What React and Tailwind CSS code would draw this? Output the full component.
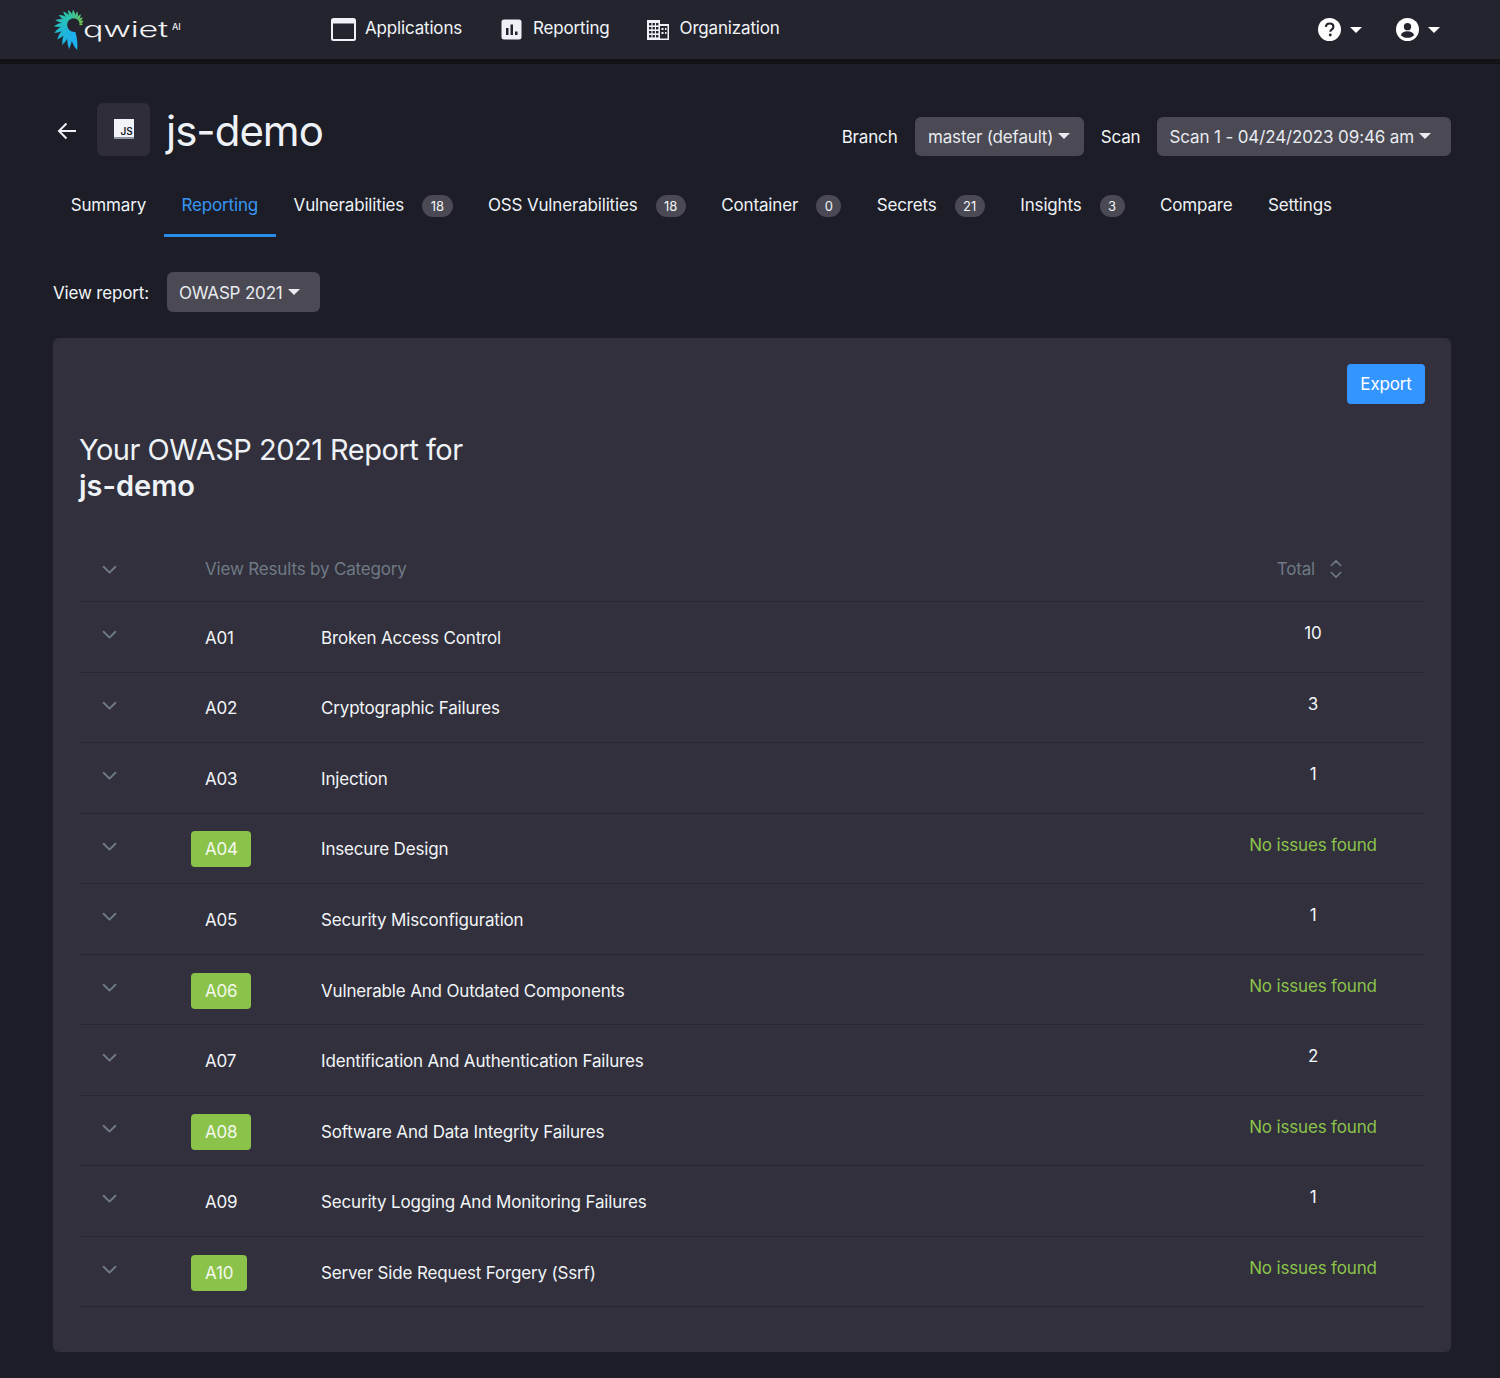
import React from "react";

const Caret = ({ className = "" }) => (
  <span className={"inline-block w-0 h-0 border-x-[6px] border-x-transparent border-t-[6px] border-t-current " + className} />
);

const Chevron = ({ up = false, className = "" }) => (
  <svg viewBox="0 0 14 9" className={className} fill="none" stroke="currentColor" strokeWidth="1.8" strokeLinecap="round" strokeLinejoin="round">
    <path d={up ? "M1.5 7.5 7 2l5.500 5.500" : "M1.500 1.500 7 7l5.500-5.500"} />
  </svg>
);

const mix = (a, b, t) => a.map((v, i) => Math.round(v + (b[i] - v) * t));
const bladeColor = (t) => {
  const g = [122, 199, 79], m = [44, 196, 170], b = [28, 176, 238];
  const c = t < 0.45 ? mix(g, m, t / 0.45) : mix(m, b, (t - 0.45) / 0.55);
  return `rgb(${c.join(",")})`;
};

const Logo = () => {
  const cx = 21, cy = 14.5, n = 16;
  const pt = (r, deg) => {
    const a = (deg * Math.PI) / 180;
    return [cx + r * Math.cos(a), cy - r * Math.sin(a)];
  };
  const f = (p) => p[0].toFixed(2) + " " + p[1].toFixed(2);
  const blades = [];
  for (let i = 0; i < n; i++) {
    const t = i / (n - 1);
    const th = -8 + t * 262;
    const ri = 5.5 + 2 * t;
    const ro = 9 + 17 * t;
    const w = 12 + 8 * t;
    const sweep = 9 + 14 * t;
    const a = pt(ri, th);
    const b = pt(ro, th + sweep);
    const c = pt(ri + 0.2, th + w + 6);
    const q1 = pt((ri + ro) / 2, th - 1);
    const q2 = pt((ri + ro) / 2 + 1, th + w + 10);
    blades.push(
      <path key={i} d={`M${f(a)} Q${f(q1)} ${f(b)} Q${f(q2)} ${f(c)} Z`} fill={bladeColor(t)} />
    );
  }
  return (
    <div className="flex items-center w-[278px] h-[40px] shrink-0">
      <svg viewBox="0 0 30 40" className="w-[30px] h-[40px] shrink-0 overflow-visible">{blades}</svg>
      <div className="w-[89px]">
        <span className="block w-[57px] text-[22px] leading-none font-light text-[#f0f2f4] scale-x-[1.55] origin-left mb-[2px]" style={{ fontFamily: "Inter, sans-serif" }}>qwiet</span>
      </div>
      <span className="text-[9px] leading-none text-[#e8eaec] font-medium mb-[7px]">AI</span>
    </div>
  );
};

const WindowIcon = () => (
  <svg viewBox="0 0 25 23" className="w-[25px] h-[23px]">
    <rect x="1" y="1" width="23" height="21" rx="1.500" fill="none" stroke="#eef2f6" strokeWidth="2" />
    <rect x="1" y="1" width="23" height="4.500" fill="#eef2f6" />
  </svg>
);
const ChartIcon = () => (
  <svg viewBox="0 0 21 21" className="w-[21px] h-[21px]">
    <rect x="0.500" y="0.500" width="20" height="20" rx="2.500" fill="#eef2f6" />
    <rect x="5" y="9" width="2.500" height="7" fill="#24242f" />
    <rect x="9.500" y="5.500" width="2.500" height="10.500" fill="#24242f" />
    <rect x="14" y="12.500" width="2.500" height="3.500" fill="#24242f" />
  </svg>
);
const BuildingIcon = () => (
  <svg viewBox="0 0 24 22" className="w-[24px] h-[22px]">
    <path d="M1 1h13v4h9v16H1z" fill="#eef2f6" />
    <g fill="#24242f">
      <rect x="3" y="4" width="2.400" height="2.400" /><rect x="6.500" y="4" width="2.400" height="2.400" /><rect x="10" y="4" width="2.400" height="2.400" />
      <rect x="3" y="8" width="2.400" height="2.400" /><rect x="6.500" y="8" width="2.400" height="2.400" /><rect x="10" y="8" width="2.400" height="2.400" />
      <rect x="3" y="12" width="2.400" height="2.400" /><rect x="6.500" y="12" width="2.400" height="2.400" /><rect x="10" y="12" width="2.400" height="2.400" />
      <rect x="3" y="16" width="2.400" height="2.400" /><rect x="6.500" y="16" width="2.400" height="2.400" /><rect x="10" y="16" width="2.400" height="2.400" />
      <rect x="14" y="7" width="7.500" height="12.500" />
    </g>
    <g fill="#eef2f6">
      <rect x="15.500" y="9" width="2" height="2" /><rect x="19" y="9" width="1.500" height="2" />
      <rect x="15.500" y="13" width="2" height="2" /><rect x="19" y="13" width="1.500" height="2" />
    </g>
  </svg>
);
const HelpIcon = () => (
  <svg viewBox="0 0 24 24" className="w-[23px] h-[23px]">
    <circle cx="12" cy="12" r="12" fill="#fff" />
    <path d="M8.200 9.300C8.400 7 10 5.800 12.200 5.800c2.300 0 3.900 1.400 3.900 3.300 0 1.500-.8 2.300-1.900 3-1 .7-1.300 1.100-1.300 2.200" fill="none" stroke="#24242f" strokeWidth="2.200" />
    <circle cx="12.800" cy="17.800" r="1.500" fill="#24242f" />
  </svg>
);
const UserIcon = () => (
  <svg viewBox="0 0 24 24" className="w-[23px] h-[23px]">
    <circle cx="12" cy="12" r="12" fill="#fff" />
    <circle cx="12" cy="9" r="3.800" fill="#24242f" />
    <path d="M5 18c.8-3 3.500-4.300 7-4.300s6.200 1.300 7 4.300c-1.800 1.700-4.200 2.700-7 2.700s-5.200-1-7-2.700z" fill="#24242f" />
  </svg>
);

const NavItem = ({ icon, label, gap, className = "" }) => (
  <div className={"flex items-center " + className}>
    {icon}
    <span className={"text-[#f2f5f8] mb-[4px] " + gap}>{label}</span>
  </div>
);

const Tab = ({ label, count, active }) => (
  <div className={"flex items-center h-[64px] px-[17.75px] pt-[2px] border-b-[3px] " + (active ? "border-[#2a8ae8] text-[#3797f5]" : "border-transparent text-[#eef2f6]")}>
    <span>{label}</span>
    {count !== undefined && (
      <span className="ml-[18px] h-[22px] px-[8.5px] rounded-full bg-[#4a4954] text-[#f2f5f8] text-[13px] tracking-normal flex items-center justify-center mt-[2px]">{count}</span>
    )}
  </div>
);

const DropBtn = ({ label, className = "", textClass = "" }) => (
  <div className={"flex items-center rounded-[6px] bg-[#4a4954] text-[#e9ebef] " + className}>
    <span className={"mt-[2px] " + textClass}>{label}</span>
    <Caret className="ml-[5px]" />
  </div>
);

const rows = [
  ["A01", "Broken Access Control", "10"],
  ["A02", "Cryptographic Failures", "3"],
  ["A03", "Injection", "1"],
  ["A04", "Insecure Design", null],
  ["A05", "Security Misconfiguration", "1"],
  ["A06", "Vulnerable And Outdated Components", null],
  ["A07", "Identification And Authentication Failures", "2"],
  ["A08", "Software And Data Integrity Failures", null],
  ["A09", "Security Logging And Monitoring Failures", "1"],
  ["A10", "Server Side Request Forgery (Ssrf)", null],
];

const Row = ({ code, name, total }) => (
  <div className="flex h-[70.56px] border-b border-[#272631]">
    <div className="w-[111px] pl-[22px] pt-[28px]">
      <Chevron className="w-[15px] h-[10px] text-[#6f7a85]" />
    </div>
    <div className="w-[130px] flex items-center pt-[2px]">
      {total === null ? (
        <span className="h-[36px] rounded-[4px] bg-[#8bc34a] text-[#f4f8ee] flex items-center pl-[14px] pr-[13.5px]">{code}</span>
      ) : (
        <span className="pl-[14px] text-[#f2f5f8]">{code}</span>
      )}
    </div>
    <div className="flex-1 flex items-center pt-[2px] text-[#f2f5f8]">{name}</div>
    <div className={"w-[128px] mr-[47px] text-center whitespace-nowrap pt-[18px] " + (total === null ? "text-[#8bc34a]" : "text-[#f2f5f8]")}>
      {total === null ? "No issues found" : total}
    </div>
  </div>
);

export default function App() {
  return (
    <div className="min-h-[1378px] bg-[#1c1d26] text-[17px] leading-[26px] tracking-[-0.17px] text-[#f2f5f8]" style={{ fontFamily: "Inter, 'Noto Sans', sans-serif" }}>
      <header className="h-[64px] bg-[#24242f] border-b-[5px] border-[#121217] flex items-center pl-[53px] pr-[60px]">
        <Logo />
        <NavItem icon={<WindowIcon />} label="Applications" gap="ml-[9px]" />
        <NavItem icon={<ChartIcon />} label="Reporting" gap="ml-[11px]" className="ml-[39px]" />
        <NavItem icon={<BuildingIcon />} label="Organization" gap="ml-[10px]" className="ml-[36px]" />
        <div className="ml-auto flex items-center text-white">
          <HelpIcon />
          <Caret className="ml-[9px] mr-[34px] mt-[1px]" />
          <UserIcon />
          <Caret className="ml-[9px] mt-[1px]" />
        </div>
      </header>

      <main className="pl-[53px] pr-[49px]">
        <div className="flex items-center h-[80px] mt-[27px]">
          <svg viewBox="0 0 20 18" className="w-[20px] h-[18px] ml-[4px] text-[#eef2f6]" fill="none" stroke="currentColor" strokeWidth="2">
            <path d="M19 9H2M9.500 1.500 2 9l7.500 7.500" />
          </svg>
          <div className="ml-[20px] mb-[4px] w-[53px] h-[53px] rounded-[6px] bg-[#2e2d39] flex items-center justify-center">
            <div className="w-[20px] h-[20px] bg-[#f0f3f7] border-b-2 border-[#8c96a3] flex items-end justify-end pr-[1px] text-[10px] leading-[11px] font-semibold text-[#24242f]">JS</div>
          </div>
          <h1 className="ml-[16px] text-[42px] leading-[50px] font-normal text-[#eef2f6] tracking-[-1px]">js-demo</h1>
          <div className="ml-auto flex items-center mt-[10px]">
            <span className="mt-[2px]">Branch</span>
            <DropBtn label="master (default)" className="ml-[17px] h-[39px] px-[13.5px]" />
            <span className="ml-[17px] mt-[2px]">Scan</span>
            <DropBtn label="Scan 1 - 04/24/2023 09:46 am" textClass="tracking-[-0.13px]" className="ml-[17px] h-[39px] pl-[12px] pr-[20px]" />
          </div>
        </div>

        <nav className="flex mt-[2px]">
          <Tab label="Summary" />
          <Tab label="Reporting" active />
          <Tab label="Vulnerabilities" count="18" />
          <Tab label="OSS Vulnerabilities" count="18" />
          <Tab label="Container" count="0" />
          <Tab label="Secrets" count="21" />
          <Tab label="Insights" count="3" />
          <Tab label="Compare" />
          <Tab label="Settings" />
        </nav>

        <div className="flex items-center mt-[35px]">
          <span className="mt-[2px]">View report:</span>
          <DropBtn label="OWASP 2021" className="ml-[18px] h-[40px] pl-[12px] pr-[20px]" />
        </div>

        <section className="mt-[26px] h-[1014px] rounded-[6px] bg-[#31303c] px-[27px] pt-[26px]">
          <div className="flex justify-end">
            <button className="h-[40px] w-[78px] -mr-[1px] rounded-[4px] bg-[#3395ff] text-white">Export</button>
          </div>
          <h2 className="mt-[28px] -ml-[1px] text-[29px] leading-[36px] font-normal text-[#eef2f6] tracking-[-0.5px]">
            Your OWASP 2021 Report for<br /><b className="font-semibold tracking-[0px]">js-demo</b>
          </h2>
          <div className="mt-[30px] flex h-[68px] border-b border-[#272631] text-[#6f7a85]">
            <div className="w-[111px] pl-[22px] pt-[31px]">
              <Chevron className="w-[15px] h-[10px]" />
            </div>
            <div className="flex-1 flex items-center pl-[14px] pt-[3px]">View Results by Category</div>
            <div className="flex items-center pt-[3px] mr-[82px]">
              <span>Total</span>
              <span className="ml-[15px] flex flex-col gap-[4px]">
                <Chevron up className="w-[12px] h-[8px]" />
                <Chevron className="w-[12px] h-[8px]" />
              </span>
            </div>
          </div>
          {rows.map((r) => (
            <Row key={r[0]} code={r[0]} name={r[1]} total={r[2]} />
          ))}
        </section>
        <div className="h-[26px]" />
      </main>
    </div>
  );
}
